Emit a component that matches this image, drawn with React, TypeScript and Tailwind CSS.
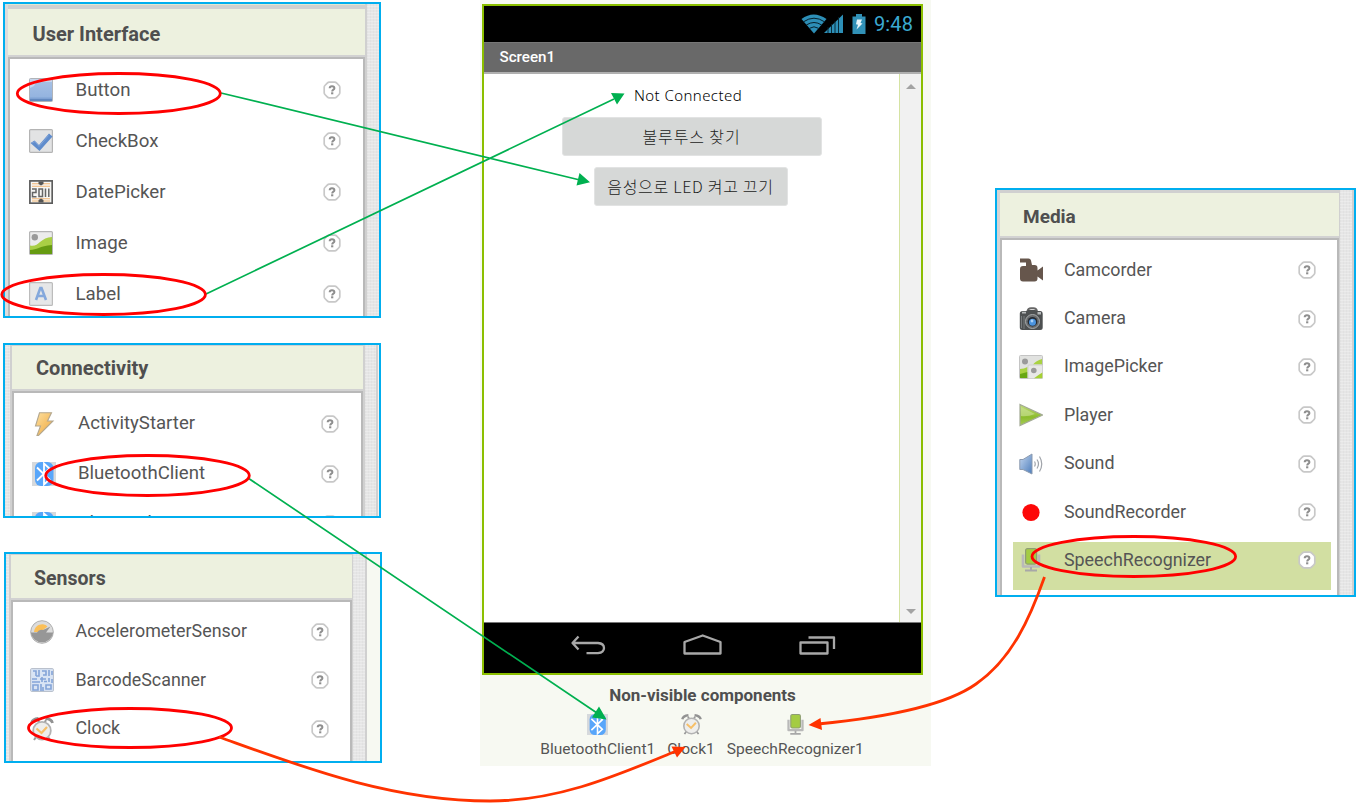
import React from "react";

const weave =
  "bg-[#e6e6e6] bg-[repeating-linear-gradient(0deg,rgba(255,255,255,0.25)_0_1px,transparent_1px_3px),repeating-linear-gradient(90deg,rgba(205,205,205,0.2)_0_1px,transparent_1px_3px)]";

function Svg({ children, className = "size-6" }: { children: React.ReactNode; className?: string }) {
  return (
    <svg viewBox="0 0 24 24" className={`block shrink-0 ${className}`}>
      {children}
    </svg>
  );
}

function Help() {
  return (
    <svg viewBox="0 0 18 18" className="block size-[18px] shrink-0">
      <path
        d="M6.200 1.200h5.600q1 0 1.700.7l2.600 2.600q.7.700.7 1.700v5.600q0 1-.7 1.700l-2.600 2.600q-.7.700-1.700.7H6.200q-1 0-1.700-.7l-2.600-2.600q-.7-.7-.7-1.700V6.200q0-1 .7-1.700l2.600-2.600q.7-.7 1.700-.7z"
        fill="#fff"
        stroke="#c8c8c8"
        strokeWidth="1.700"
      />
      <path d="M6.700 7.200c0-1.400 1-2 2.300-2s2.400.6 2.400 2c0 1.500-2.200 1.400-2.200 3.200" fill="none" stroke="#8e8e8e" strokeWidth="2" />
      <rect x="8.100" y="11.300" width="2.200" height="2" fill="#8e8e8e" />
    </svg>
  );
}

const ButtonIcon = () => (
  <Svg>
    <defs>
      <linearGradient id="btn" x1="0" y1="0" x2="0" y2="1">
        <stop offset="0" stopColor="#a9c3e6" />
        <stop offset="1" stopColor="#8fb0de" />
      </linearGradient>
    </defs>
    <rect x="0.500" y="0.500" width="23" height="23" rx="1" fill="url(#btn)" stroke="#b0b3b8" />
    <path d="M1 1h22v3H9q-3 1-4 4l-4 2z" fill="#c6d6ec" />
    <path d="M1 19.500h22v1.500H1z" fill="#7fa2d4" />
    <path d="M1 21h22v2H1z" fill="#6288be" />
  </Svg>
);

const CheckIcon = () => (
  <Svg>
    <rect x="0.600" y="0.600" width="22.800" height="22.800" rx="1" fill="#e2e3e4" stroke="#b4b4b4" strokeWidth="1.200" />
    <path d="M1.500 14l4-2.500 4.500 4.500L20 4.500l3.500 3L10.500 22z" fill="#5f8ccc" />
    <path d="M3 14l3-1.500 4 5 9.500-11" fill="none" stroke="#7fa3d8" strokeWidth="1" />
  </Svg>
);

const DateIcon = () => (
  <Svg>
    <rect x="0.900" y="0.900" width="22.300" height="22.300" fill="#f6f6f4" stroke="#5c5c5c" strokeWidth="1.700" />
    <path d="M3 3.800h7M14 3.800h7M3 6.300h18M3 18.800h18M3 21h7M14 21h7" stroke="#f2b573" strokeWidth="1.100" />
    <path d="M9.500 1.500h5V4l-2.500 1.500L9.500 4zM12 18.500l2.500 1.500v2.500h-5V20z" fill="#555" />
    <path d="M3 9h4v3.500H3.500v4.200H7.500M10 9h3.500v7.500H10zM16.500 8.500v8.500M19.800 8.500v8.500" fill="none" stroke="#666" strokeWidth="1.500" />
  </Svg>
);

const ImageIcon = () => (
  <Svg>
    <rect x="0.600" y="0.600" width="22.800" height="22.800" rx="1" fill="#ececec" stroke="#b5b5b5" strokeWidth="1.200" />
    <circle cx="5.800" cy="6.200" r="3.200" fill="#999" />
    <path d="M1 14.500c5 1 7-1 10-3.500S18 6 23 6v17H1z" fill="#a9cf45" />
    <path d="M1 19c7 0 9-4 22-5v9H1z" fill="#669b12" />
  </Svg>
);

const LabelIcon = () => (
  <Svg>
    <rect x="0.600" y="0.600" width="22.800" height="22.800" rx="1" fill="#e6e7e8" stroke="#bcbcbc" strokeWidth="1.200" />
    <path d="M7 18L11.300 6h1.200L17 18M8.500 14h7" fill="none" stroke="#84a8dc" strokeWidth="2.600" />
  </Svg>
);

const BoltIcon = () => (
  <Svg>
    <defs>
      <linearGradient id="bolt" x1="0" y1="0" x2="1" y2="1">
        <stop offset="0" stopColor="#fde0a0" />
        <stop offset="1" stopColor="#efa63a" />
      </linearGradient>
    </defs>
    <path d="M7.500 .8H19.500L15.500 9h5.500L6.500 23.500H5L8.500 14H3.500z" fill="url(#bolt)" stroke="#b3a78f" strokeWidth="1.100" />
  </Svg>
);

const BluetoothIcon = ({ className }: { className?: string }) => (
  <Svg className={className}>
    <rect width="24" height="24" fill="#d6d9dc" />
    <rect x="3" y="0" width="18.500" height="24" rx="6" fill="#58a6fa" />
    <path d="M5 5.500l12.500 12L12 22.500V1.500l5.500 5L5 18.500" fill="none" stroke="#fff" strokeWidth="1.800" />
  </Svg>
);

const GaugeIcon = () => (
  <Svg>
    <circle cx="12" cy="12" r="11.300" fill="#dcdcdc" stroke="#b0b0b0" />
    <path d="M4 12C4.500 6.500 9 3.800 13 4.200q3 .3 4.500 2.300L13 10l1 2z" fill="#fbbf57" />
    <path d="M.8 12.500H7q2-3.500 6-2.500l7.500-3.500-4.500 6h7.200a11.300 11.300 0 0 1-22.400 0z" fill="#979797" />
  </Svg>
);

const BarcodeIcon = () => (
  <Svg>
    <rect x="0.600" y="0.600" width="22.800" height="22.800" rx="1" fill="#d9e4f4" stroke="#b4bcc8" />
    <path
      d="M3 3h3v5M9 2v6H6M12 3h4v4h-3M19 2v6M22 3v4M2 11h5M10 11h6M19 10v4M12 9v5M2 14h8M14 13.500h3M3 17h5v5H3zM11 16v7M16 17h5v4h-5zM22 11v4M13 19v4"
      fill="none"
      stroke="#84a4d8"
      strokeWidth="1.600"
    />
  </Svg>
);

const ClockIcon = ({ className }: { className?: string }) => (
  <Svg className={className}>
    <path d="M1.500 6q1-4 7-4.500M22.500 6q-1-4-7-4.500" fill="none" stroke="#929292" strokeWidth="2.800" />
    <path d="M6 20l-2 3M18 20l2 3M8 3l1.500 3M16 3l-1.500 3" stroke="#999" strokeWidth="2" />
    <circle cx="12" cy="13.700" r="8.800" fill="#eeeeec" stroke="#b2b2b2" strokeWidth="1.800" />
    <path d="M6.500 11.500l5 4.500 5.500-6" fill="none" stroke="#f7bf67" strokeWidth="2.200" />
  </Svg>
);

const CamcorderIcon = () => (
  <Svg>
    <path
      d="M1 .5h8.500q2 0 2.500 2l1 4.500h2.500q3 0 3 3v2.500L24 8.500v14l-5.500-4v2q0 3-3 3H4q-3 0-3-3V11q0-3 3-3h3V4.500H1z"
      fill="#66564c"
    />
  </Svg>
);

const CameraIcon = () => (
  <Svg>
    <path d="M8.500 4.500Q9 1.200 12 1.200h2.500q3 0 3.500 3.300" fill="none" stroke="#666" strokeWidth="2" />
    <path d="M.8 6.500q0-2.500 3-2.500h3.500l2-1h7l2 1H21q2.700 0 2.700 3v13.500q0 2.500-2.500 2.500H3.300Q.8 23 .8 20.500z" fill="#4d5051" />
    <path d="M3 4.800h4v1.700H3zM18.500 5h3.500v2.500h-3.500z" fill="#b5b8b9" />
    <path d="M2.500 9v12M5 9v13" stroke="#777b7d" />
    <circle cx="13.500" cy="14.500" r="7" fill="#686b6d" stroke="#a7aaab" />
    <circle cx="13.500" cy="14.700" r="4.800" fill="#252b33" />
    <circle cx="13.500" cy="15.200" r="3.500" fill="#4b94df" />
    <circle cx="13" cy="14" r="1.400" fill="#a9d1f8" />
  </Svg>
);

const PickerIcon = () => (
  <Svg>
    <rect x="0.500" y="0.500" width="23" height="23" rx="1" fill="#e1e2e0" stroke="#c4c4c4" />
    <circle cx="6" cy="6.500" r="3" fill="#9a9a9a" />
    <path d="M14 9.500q3-4 9-5.500v5.500zM1 14q4 0 7.500-2v11H1z" fill="#a9d242" />
    <path d="M1 19l7.500-2v6H1z" fill="#68a713" />
    <rect x="9" y="10" width="14.500" height="13.500" rx="1" fill="#e8e8e7" stroke="#d0d0d0" />
    <circle cx="14.800" cy="15.500" r="2.800" fill="#9a9a9a" />
    <path d="M15 23.200q4-3 8.300-5.700v5.700z" fill="#a5d033" />
  </Svg>
);

const PlayerIcon = () => (
  <Svg>
    <defs>
      <linearGradient id="play" x1="0" y1="0" x2="0" y2="1">
        <stop offset="0.100" stopColor="#b9d86e" />
        <stop offset="0.600" stopColor="#8cbc2d" />
        <stop offset="1" stopColor="#a6cc58" />
      </linearGradient>
    </defs>
    <path d="M1 1.500L23.500 12 1 22.500z" fill="url(#play)" stroke="#a3aa95" strokeWidth="1.200" />
    <path d="M2 4l14 7q-8 3-14 2z" fill="#cde39a" opacity=".6" />
  </Svg>
);

const SoundIcon = () => (
  <Svg>
    <defs>
      <linearGradient id="snd" x1="0" y1="0" x2="1" y2="1">
        <stop offset="0" stopColor="#c4d7f0" />
        <stop offset="1" stopColor="#4d7dbb" />
      </linearGradient>
    </defs>
    <path d="M0.800 7.500H4l9-5.500v20L4 17.500H.8z" fill="url(#snd)" stroke="#8c9bb0" />
    <path d="M15.500 9.500q1.500 2.500 0 5M18 7.500q3 4.500 0 9M20.500 4.500q4.500 7.500 0 15" fill="none" stroke="#a0a4aa" strokeWidth="1.200" />
  </Svg>
);

const RecordIcon = () => (
  <Svg>
    <circle cx="12" cy="12.500" r="8.600" fill="#fd0808" />
  </Svg>
);

const MicIcon = ({ className }: { className?: string }) => (
  <Svg className={className}>
    <path d="M4 6.500V18.500H20V6.500" fill="none" stroke="#b9b9b9" strokeWidth="2.600" strokeLinejoin="round" />
    <path d="M12 19v3.500M6 22.600h12" stroke="#a8a8a8" strokeWidth="2" />
    <rect x="6.600" y="0.600" width="11" height="15.500" rx="1.800" fill="#a4cc43" stroke="#8e9d74" strokeWidth="1.200" />
  </Svg>
);

type Item = { name: string; icon: React.ReactNode; active?: boolean };

type PanelProps = {
  title: string;
  items: Item[];
  frame: string;
  gutter: string;
  top: string;
  header: string;
  list: string;
  row: string;
  gap: string;
  side: React.ReactNode;
};

function Panel({ title, items, frame, gutter, top, header, list, row, gap, side }: PanelProps) {
  return (
    <section className={`flex shrink-0 overflow-hidden border-2 border-[#00aeef] ${frame}`}>
      <div className={`shrink-0 ${gutter}`} />
      <div className="flex min-w-0 flex-1 flex-col">
        <div className={`shrink-0 bg-[#d0d0d0] ${top}`} />
        <h2 className={`flex shrink-0 items-center bg-[#edf1df] font-bold text-[#4f4f4f] ${header}`}>{title}</h2>
        <div className="h-[2px] shrink-0 bg-[#d2d2d2]" />
        <ul className={`min-h-0 flex-1 overflow-hidden border-x-2 border-t-2 border-[#b9b9b9] bg-white text-[#555] ${list}`}>
          {items.map((item) => (
            <li key={item.name} className={`flex items-center ${row} ${item.active ? "bg-[#d2dfa2]" : ""}`}>
              {item.icon}
              <span className={`flex-1 whitespace-nowrap ${gap}`}>{item.name}</span>
              <Help />
            </li>
          ))}
        </ul>
      </div>
      {side}
    </section>
  );
}

function Phone() {
  return (
    <div className="mt-1 ml-0.5 flex h-[671px] w-[441px] flex-col border-2 border-[#8bbf00] bg-white">
      <div className="flex h-9 shrink-0 items-center justify-end bg-black pr-2 text-[#3ba9d0]">
        <svg viewBox="0 0 43 22" className="block h-[22px] w-[43px]">
          <path d="M.5 6q12-9 25 0L13 20.500z" fill="#2d8fb7" />
          <path d="M2.500 8.800q10.500-7.200 21 0M5.300 12q7.700-5 15.400 0M8.500 15.300q4.500-3 9 0" fill="none" stroke="#06202b" strokeWidth="1" />
          <path d="M23 20L42 1.500V20z" fill="#2d8fb7" />
          <path d="M27 14v6M30.500 11v9M34 8v12M37.500 4v16" stroke="#06202b" strokeWidth=".9" />
        </svg>
        <svg viewBox="0 0 14 20" className="mr-px ml-[8px] block h-5 w-[14px]">
          <path d="M.5 2.500H4V0h6v2.500h3.500V20H.5z" fill="#3191b7" />
          <path d="M5 5.500h5L8.500 9l2 .5-6 6L6 10.800l-2-.5z" fill="#e8f6fb" />
        </svg>
        <span className="ml-[7px] text-[20px] leading-none tracking-[0.1px]">9:48</span>
      </div>
      <div className="flex h-8 shrink-0 items-center border-t border-b-2 border-t-[#777] border-b-[#b0b0b0] bg-[#696969] pl-[15.500px] text-[15.200px] font-medium text-white">
        Screen1
      </div>
      <div className="flex min-h-0 flex-1">
        <div className="flex flex-1 flex-col items-center font-['Noto_Sans','Noto_Sans_CJK_KR',sans-serif] text-[#222]">
          <div className="mt-[9px] mr-[7px] h-6 text-[15px] leading-6 font-light tracking-[0.42px] text-black">
            Not Connected
          </div>
          <div className="mt-[10px] mr-[7px] ml-[7px] flex h-[39px] w-[260px] shrink-0 items-center justify-center rounded-[3px] border border-[#e2e3e3] bg-[#d6d8d7] pb-[2px] font-['Noto_Sans_CJK_KR',sans-serif] text-[16px] font-light tracking-[0.9px]">
            불루투스 찾기
          </div>
          <div className="mt-[11px] mr-[2px] flex h-[39px] w-[194px] shrink-0 items-center justify-center rounded-[3px] border border-[#e2e3e3] bg-[#d6d8d7] pb-px font-['Noto_Sans_CJK_KR',sans-serif] text-[16px] font-light tracking-[0.7px] whitespace-nowrap">
            음성으로 LED 켜고 끄기
          </div>
        </div>
        <div className="flex w-[22px] flex-col items-center justify-between border-l border-[#d5e3a2] bg-[#f1f1f1] pt-[10px] pb-2">
          <svg viewBox="0 0 10 5" className="block h-[5px] w-[10px]">
            <path d="M0 5l5-5 5 5z" fill="#a3a3a3" />
          </svg>
          <svg viewBox="0 0 10 5" className="block h-[5px] w-[10px]">
            <path d="M0 0l5 5 5-5z" fill="#a3a3a3" />
          </svg>
        </div>
      </div>
      <div className="flex h-[51px] shrink-0 items-start border-t border-[#777] bg-black pt-2 pl-[84px]">
        <svg viewBox="0 0 272 28" className="block h-7 w-[272px]" fill="none" stroke="#a8a8a8" strokeWidth="2.300" strokeLinejoin="round">
          <path d="M10.500 5.500L4.500 12l6 6.500M5 12h25q6 .5 6 5t-6 5.200H18.500" />
          <path d="M116.500 22.500V11L134.700 4.500 152.500 11v11.500z" />
          <path d="M232.500 11.500h27v11h-27zM240.500 6.500h25.500V18" />
        </svg>
      </div>
    </div>
  );
}

function Annotations() {
  return (
    <svg viewBox="0 0 1356 803" className="pointer-events-none absolute top-0 left-0 h-[803px] w-[1356px]" fill="none">
      <g stroke="#00b050" strokeWidth="1.700">
        <path d="M221 93L582 180.500M206 294L614 99M248 478L597 713" />
      </g>
      <g fill="#00b050">
        <path d="M590 182.300L576.500 185.500 579.500 173zM624.500 93.500L617 104.500 611 93zM606.500 719.500L592 717.500 599 706.500z" />
      </g>
      <g stroke="#f00" strokeWidth="2.800">
        <ellipse cx="118.800" cy="93.500" rx="101.500" ry="20" />
        <ellipse cx="103.600" cy="294.500" rx="101.800" ry="20" />
        <ellipse cx="147.500" cy="475.500" rx="101.800" ry="20" />
        <ellipse cx="130" cy="728" rx="101.500" ry="19.500" />
        <ellipse cx="1133.800" cy="556.500" rx="101.800" ry="20" />
      </g>
      <g stroke="#ff3300" strokeWidth="2.800">
        <path d="M219 737C300 766 390 801 490 801C560 801 620 774 675 751.500" />
        <path d="M1044.500 577C1030 618 1012 659 976 684C945 706 880 718 818 724" />
      </g>
      <g fill="#ff3300">
        <path d="M685.500 747L677 757.500 671.500 746.500zM808.500 725L820.500 718 822 730z" />
      </g>
    </svg>
  );
}

export default function App() {
  return (
    <main className="relative flex h-[803px] w-[1356px] overflow-hidden bg-white font-['Roboto',sans-serif]">
      <div className="flex w-[480px] shrink-0 flex-col pt-[2px] pl-[3px]">
        <Panel
          title="User Interface"
          frame="h-[316px] w-[378px]"
          gutter="w-[3px] bg-[#dcdcdc]"
          top="h-[5px] border-t border-b-2 border-t-[#e2e7cf] border-b-[#d0d0d0] bg-[#aeb39f]"
          header="h-[46px] pl-[24.500px] pt-[3px] text-[20px]"
          list="pt-[6px] text-[18.700px]"
          row="h-[50.800px] pl-[19px] pr-[22px]"
          gap="pl-[22.500px]"
          side={<div className={`w-[14px] border-l-2 border-[#d0d0d0] ${weave}`} />}
          items={[
            { name: "Button", icon: <ButtonIcon /> },
            { name: "CheckBox", icon: <CheckIcon /> },
            { name: "DatePicker", icon: <DateIcon /> },
            { name: "Image", icon: <ImageIcon /> },
            { name: "Label", icon: <LabelIcon /> },
          ]}
        />
        <div className="h-[25px] shrink-0" />
        <Panel
          title="Connectivity"
          frame="h-[175px] w-[378px]"
          gutter={`w-[7px] border-r-2 border-[#d0d0d0] ${weave}`}
          top="h-px"
          header="h-[43px] pl-6 pt-px text-[20px]"
          list="pt-[6px] text-[18.600px]"
          row="h-[50px] pl-[18px] pr-[22px]"
          gap="pl-[22px]"
          side={
            <div className="flex w-4">
              <div className={`w-[15px] border-x-2 border-[#d0d0d0] ${weave}`} />
              <div className="flex-1 bg-[#f3f3f3]" />
            </div>
          }
          items={[
            { name: "ActivityStarter", icon: <BoltIcon /> },
            { name: "BluetoothClient", icon: <BluetoothIcon /> },
            { name: "BluetoothServer", icon: <BluetoothIcon /> },
          ]}
        />
        <div className="h-[34px] shrink-0" />
        <Panel
          title="Sensors"
          frame="ml-px h-[211px] w-[378px]"
          gutter={`w-[5px] border-r-2 border-[#d0d0d0] ${weave}`}
          top="h-px"
          header="h-[43px] pl-[23px] pt-[5px] text-[19.500px]"
          list="pt-[6px] text-[17.850px]"
          row="h-[48.300px] pl-[17px] pr-[21px]"
          gap="pl-[21.500px] pb-px"
          side={
            <div className="flex w-7">
              <div className={`w-[15px] border-r-2 border-l border-[#d0d0d0] ${weave}`} />
              <div className="flex-1 bg-[#f7f9f2]" />
            </div>
          }
          items={[
            { name: "AccelerometerSensor", icon: <GaugeIcon /> },
            { name: "BarcodeScanner", icon: <BarcodeIcon /> },
            { name: "Clock", icon: <ClockIcon /> },
          ]}
        />
      </div>

      <div className="h-[766px] w-[451px] shrink-0 bg-[#f7f9f2]">
        <Phone />
        <div className="flex flex-col items-center pr-[7px] text-[#555]">
          <h2 className="mt-[8px] pl-px text-[17px] leading-6 font-bold text-[#4f4f4f]">Non-visible components</h2>
          <div className="mt-[7px] flex gap-[12px] text-[15.550px] leading-5">
            <div className="flex flex-col items-center gap-[4px]">
              <BluetoothIcon className="size-[21px]" />
              <span>BluetoothClient1</span>
            </div>
            <div className="flex flex-col items-center gap-[4px]">
              <ClockIcon className="size-[21px]" />
              <span>Clock1</span>
            </div>
            <div className="flex flex-col items-center gap-[4px]">
              <MicIcon className="size-[21px]" />
              <span>SpeechRecognizer1</span>
            </div>
          </div>
        </div>
      </div>

      <div className="ml-16 shrink-0 pt-[188px]">
        <Panel
          title="Media"
          frame="h-[409px] w-[361px]"
          gutter="w-[3px] bg-[#d4d4d4]"
          top="h-[3px]"
          header="h-[43px] pl-[23px] pt-[5px] text-[19px]"
          list="pl-[11px] pr-[6px] pt-[12px] text-[17.850px]"
          row="h-[48.350px] pl-[6px] pr-[15px] pb-[12px]"
          gap="pl-[21px]"
          side={
            <div className="flex w-[15px]">
              <div className={`w-[15px] border-r-2 border-l border-[#d0d0d0] ${weave}`} />
            </div>
          }
          items={[
            { name: "Camcorder", icon: <CamcorderIcon /> },
            { name: "Camera", icon: <CameraIcon /> },
            { name: "ImagePicker", icon: <PickerIcon /> },
            { name: "Player", icon: <PlayerIcon /> },
            { name: "Sound", icon: <SoundIcon /> },
            { name: "SoundRecorder", icon: <RecordIcon /> },
            { name: "SpeechRecognizer", icon: <MicIcon />, active: true },
          ]}
        />
      </div>
      <Annotations />
    </main>
  );
}
